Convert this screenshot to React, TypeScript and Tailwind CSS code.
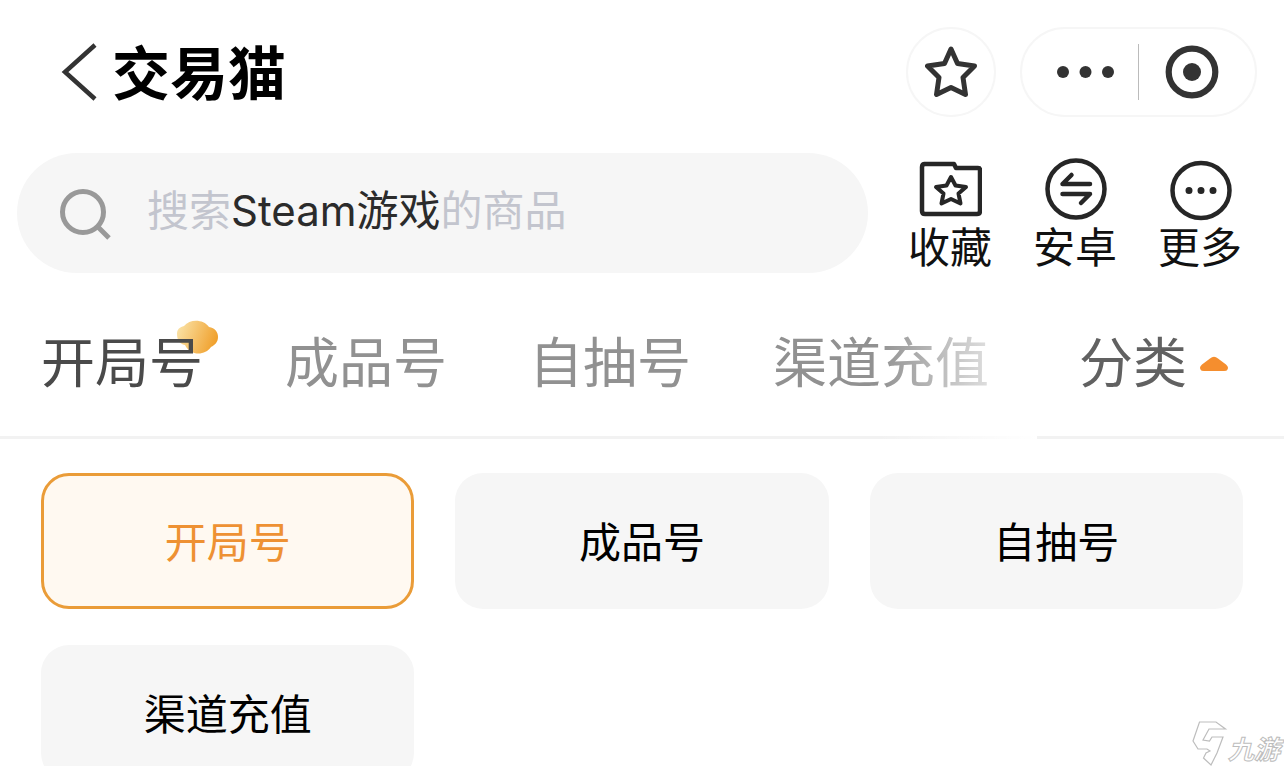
import type { ReactNode } from "react";

const tabs = ["开局号", "成品号", "自抽号", "渠道充值"];

const STAR = "M26 3 L32.5 17.5 L49.5 20 L38 31.5 L40.5 48.5 L26 41.5 L11.5 48.5 L14 31.5 L2.5 20 L19.5 17.5 Z";

function Shortcut({ label, children }: { label: string; children: ReactNode }) {
    return (
        <button type="button" className="flex flex-col items-center text-[42px] leading-[48px] text-[#111]">
            <svg width="64" height="64" viewBox="0 0 64 64" fill="none" stroke="#262626" strokeWidth="4.5" strokeLinecap="round" strokeLinejoin="round">
                {children}
            </svg>
            {label}
        </button>
    );
}

export default function App() {
    return (
        <div className="relative h-screen overflow-hidden bg-white font-['Noto_Sans_CJK_SC',sans-serif] text-black">
            {/* Title bar */}
            <header className="flex items-center justify-between py-[27px] pr-[27px] pl-[58px]">
                <div className="flex items-center gap-3">
                    <button type="button" aria-label="返回">
                        <svg width="42" height="60" viewBox="0 0 42 60" fill="none" stroke="#333" strokeWidth="4.5">
                            <path d="M37 3 L7 30 L37 57" />
                        </svg>
                    </button>
                    <h1 className="pb-1 text-[58px] leading-[64px] font-bold">交易猫</h1>
                </div>

                <div className="flex gap-6">
                    <button type="button" aria-label="收藏小程序" className="flex size-[90px] items-center justify-center rounded-full border-2 border-[#f6f6f6]">
                        <svg width="52" height="52" viewBox="0 0 52 52" fill="none" stroke="#333" strokeWidth="5" strokeLinejoin="round">
                            <path d={STAR} />
                        </svg>
                    </button>
                    <div className="flex h-[90px] w-[237px] items-center rounded-full border-2 border-[#f6f6f6]">
                        <button type="button" aria-label="更多选项" className="flex flex-1 justify-end pr-6">
                            <svg width="58" height="12" viewBox="0 0 58 12" fill="#333">
                                <circle cx="7" cy="6" r="6" />
                                <circle cx="29.500" cy="6" r="6" />
                                <circle cx="52" cy="6" r="6" />
                            </svg>
                        </button>
                        <span className="h-14 w-px bg-[#bbb]" />
                        <button type="button" aria-label="关闭" className="flex flex-1 pl-[25px]">
                            <svg width="56" height="56" viewBox="0 0 56 56" fill="none">
                                <circle cx="28" cy="28" r="23.3" stroke="#333" strokeWidth="6.2" />
                                <circle cx="28" cy="28" r="9" fill="#333" />
                            </svg>
                        </button>
                    </div>
                </div>
            </header>

            {/* Search */}
            <section className="flex items-start gap-10 pt-[9px] pr-[42px] pl-[17px]">
                <label className="grid h-[120px] flex-1 grid-cols-[130px_1fr] items-center rounded-full bg-[#f6f6f6]">
                    <svg className="ml-[42px]" width="54" height="58" viewBox="0 0 54 58" fill="none" stroke="#999" strokeWidth="5">
                        <circle cx="24" cy="28" r="20.5" />
                        <path d="M38 42 L50 54" />
                    </svg>
                    <span className="relative block">
                        <input type="search" aria-label="搜索商品" className="h-16 w-full bg-transparent text-[42px] outline-none" />
                        <span className="pointer-events-none absolute inset-0 text-[42px] leading-[54px] whitespace-nowrap text-[#c3c5ce]">
                            搜索<span className="font-['Inter','Noto_Sans_CJK_SC',sans-serif] text-[#2b2b2b]">Steam游戏</span>的商品
                        </span>
                    </span>
                </label>
                <div className="flex gap-[41px] pt-1">
                    <Shortcut label="收藏">
                        <path d="M6 7 H36 L38 11 H60 Q62 11 62 13 V54 Q62 57 59 57 H7 Q4 57 4 54 V10 Q4 7 7 7 Z" />
                        <path strokeWidth="4" d="M33 20 L37.500 28.500 L48 30 L40.500 36.500 L42.500 46.500 L33 42 L23.500 46.500 L25.500 36.500 L18 30 L28.500 28.500 Z" />
                    </Shortcut>
                    <Shortcut label="安卓">
                        <circle cx="33" cy="32" r="28.500" />
                        <path d="M47 27 H19.500 L28.500 18" />
                        <path d="M19.500 37 H47 L38 46" />
                    </Shortcut>
                    <Shortcut label="更多">
                        <ellipse cx="33" cy="33.500" rx="28.500" ry="27.500" />
                        <path strokeWidth="7" d="M21 33.500 h.01 M33 33.500 h.01 M45 33.500 h.01" />
                    </Shortcut>
                </div>
            </section>

            {/* Tabs */}
            <nav className="flex border-b-[3px] border-[#f2f2f2] text-[54px] leading-[64px]">
                <div className="relative flex flex-1 gap-[82px] pt-[55px] pb-11 pl-[41px] whitespace-nowrap">
                    {tabs.map((tab, i) => (
                        <button key={tab} type="button" className={i === 0 ? "relative text-[#4a4a4a]" : "text-[#919191]"}>
                            {i === 0 && (
                                <svg className="absolute -top-2 -right-4" width="44" height="36" viewBox="0 0 44 36">
                                    <defs>
                                        <linearGradient id="cloud" x1="0" y1="0.2" x2="1" y2="0.5">
                                            <stop offset="0" stopColor="#fae3a8" />
                                            <stop offset="1" stopColor="#f0a02c" />
                                        </linearGradient>
                                    </defs>
                                    <path fill="url(#cloud)" d="M9 6 C15 -1 28 -1 34 7 C40 8 43 12 43 17 C43 22 40 25 36 27 C30 36 15 36 10 25 C4 24 2 19 2 14 C2 9 5 7 9 6 Z" />
                                </svg>
                            )}
                            <span className="relative">{tab}</span>
                        </button>
                    ))}
                    <div className="pointer-events-none absolute top-0 right-0 -bottom-[3px] w-40 bg-linear-to-r from-white/0 to-white" />
                </div>
                <button type="button" className="flex items-center gap-3 pt-[55px] pr-[55px] pb-11 pl-[42px] text-[#616161]">
                    分类
                    <svg className="mt-2" width="30" height="16" viewBox="0 0 30 16" fill="#f58e2e">
                        <path d="M11 2.500 Q15 -1 19 2.500 L27 8.500 Q30 11 28.500 13.500 Q28 15 25 15 H5 Q2 15 1.500 13.500 Q0 11 3 8.500 Z" />
                    </svg>
                </button>
            </nav>

            {/* Category options */}
            <div className="grid grid-cols-3 gap-x-[41px] gap-y-9 px-[41px] pt-[34px] text-[42px]">
                {tabs.map((tab, i) => (
                    <button
                        key={tab}
                        type="button"
                        className={
                            i === 0
                                ? "h-[136px] rounded-[28px] border-[3px] border-[#ea9c38] bg-[#fff9f1] pb-1 text-[#ee9133]"
                                : "h-[136px] rounded-[28px] bg-[#f6f6f6] pb-1"
                        }
                    >
                        {tab}
                    </button>
                ))}
            </div>

            {/* Watermark */}
            <div className="absolute right-0 bottom-0 flex items-end pr-1 text-[26px] leading-9 font-bold italic">
                <svg width="36" height="46" viewBox="0 0 36 46" fill="#fff" stroke="#bdbdbd" strokeWidth="1.200">
                    <path d="M7.500 2 H24 L33.500 9 H17 L11 20 L17.500 21 L20 17 H31 L25 33 L19 45 L11.500 38 L14 33 L18 31 L15 29 H6 L1 21 Z" />
                </svg>
                <span className="text-white [-webkit-text-stroke:1px_#bdbdbd]">九游</span>
            </div>
        </div>
    );
}
